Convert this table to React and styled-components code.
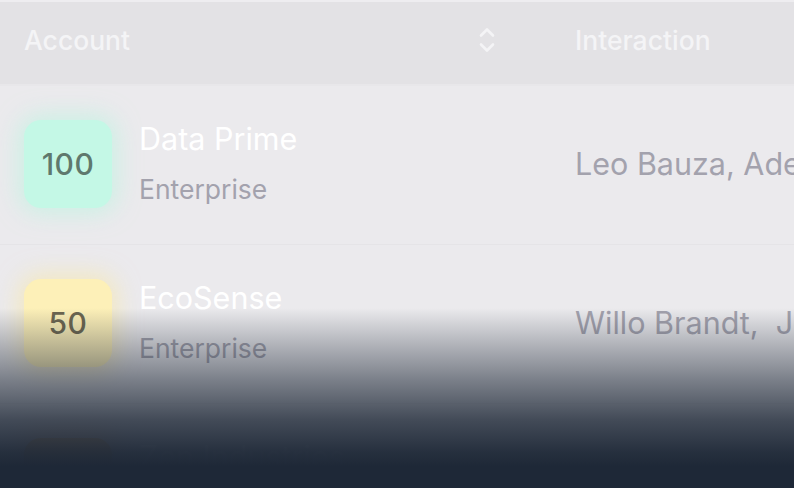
import React from "react";
import styled, { createGlobalStyle } from "styled-components";

const GlobalStyle = createGlobalStyle`
  html, body {
    margin: 0;
    padding: 0;
    background: #ebeaed;
    font-family: Inter, "Noto Sans", sans-serif;
  }
`;

const accounts = [
  {
    score: 100,
    name: "Data Prime",
    tier: "Enterprise",
    people: "Leo Bauza, Adeline Park",
    bg: "#c4f8e6",
    fg: "#5f786d",
    glow: "rgba(180, 245, 222, 0.55)",
  },
  {
    score: 50,
    name: "EcoSense",
    tier: "Enterprise",
    people: "Willo Brandt,  Jonas Reyes",
    bg: "#fdf0b8",
    fg: "#6c6650",
    glow: "rgba(250, 232, 160, 0.55)",
  },
  {
    score: 20,
    name: "Zen Industries",
    tier: "Mid-market",
    people: "",
    bg: "#f6c98e",
    fg: "#7a5e48",
    glow: "rgba(250, 200, 150, 0.5)",
  },
];

function SortIcon() {
  return (
    <svg width="18" height="26" viewBox="0 0 18 26" fill="none">
      <path
        d="M3 8.5 L9 2.5 L15 8.5"
        stroke="#f4f4f6"
        strokeWidth="2.6"
        strokeLinecap="round"
        strokeLinejoin="round"
      />
      <path
        d="M3 17.5 L9 23.5 L15 17.5"
        stroke="#f4f4f6"
        strokeWidth="2.6"
        strokeLinecap="round"
        strokeLinejoin="round"
      />
    </svg>
  );
}

export default function App() {
  return (
    <>
      <GlobalStyle />
      <Frame>
        <Table>
          <HeaderRow>
            <HeadCell>
              Account
              <SortIcon />
            </HeadCell>
            <HeadCell>Interaction</HeadCell>
          </HeaderRow>
          {accounts.map((a) => (
            <Row key={a.name}>
              <AccountCell>
                <Score $bg={a.bg} $fg={a.fg} $glow={a.glow}>
                  {a.score}
                </Score>
                <Names>
                  <Name>{a.name}</Name>
                  <Tier>{a.tier}</Tier>
                </Names>
              </AccountCell>
              <People>{a.people}</People>
            </Row>
          ))}
        </Table>
        <Fade />
      </Frame>
    </>
  );
}

const Frame = styled.div`
  position: relative;
  width: 794px;
  height: 488px;
  overflow: hidden;
  background: #ebeaed;
`;

const Table = styled.div`
  display: flex;
  flex-direction: column;
  border-top: 2px solid #eeedf0;
`;

const HeaderRow = styled.div`
  display: grid;
  grid-template-columns: 551px 1fr;
  height: 82px;
  background: #e3e2e5;
  border-bottom: 2px solid #e8e7ea;
`;

const HeadCell = styled.div`
  display: flex;
  align-items: center;
  justify-content: space-between;
  padding: 0 55px 6px 24px;
  color: #f4f4f6;
  font-size: 26.5px;
  font-weight: 500;
  white-space: nowrap;

  &:last-child {
    padding-left: 24px;
  }
`;

const Row = styled.div`
  display: grid;
  grid-template-columns: 551px 1fr;
  align-items: center;
  height: 158px;
  border-bottom: 1px solid #e5e4e7;
`;

const AccountCell = styled.div`
  display: flex;
  align-items: center;
  gap: 27px;
  padding-left: 24px;
`;

const Score = styled.div`
  width: 88px;
  height: 88px;
  border-radius: 17px;
  display: flex;
  align-items: center;
  justify-content: center;
  background: ${(p) => p.$bg};
  color: ${(p) => p.$fg};
  box-shadow: 0 0 22px 6px ${(p) => p.$glow};
  font-size: 30px;
  font-weight: 500;
  letter-spacing: 0.5px;
  margin-top: -2px;
`;

const Names = styled.div`
  display: flex;
  flex-direction: column;
  gap: 16px;
  margin-top: -4px;
`;

const Name = styled.div`
  color: #ffffff;
  font-size: 30.5px;
  font-weight: 400;
  line-height: 36px;
  white-space: nowrap;
`;

const Tier = styled.div`
  color: #a3a2ad;
  font-size: 26.5px;
  font-weight: 400;
  line-height: 32px;
`;

const People = styled.div`
  padding-left: 24px;
  margin-top: -3px;
  color: #a3a2ad;
  font-size: 30.5px;
  white-space: pre;
`;

const Fade = styled.div`
  position: absolute;
  left: 0;
  right: 0;
  bottom: 0;
  height: 180px;
  background: linear-gradient(
    to bottom,
    rgba(30, 40, 55, 0) 0%,
    rgba(30, 40, 55, 0.25) 18%,
    rgba(30, 40, 55, 0.55) 40%,
    rgba(30, 40, 55, 0.82) 62%,
    rgba(30, 40, 55, 0.96) 80%,
    rgba(30, 40, 55, 1) 88%,
    rgba(30, 40, 55, 1) 100%
  );
`;
